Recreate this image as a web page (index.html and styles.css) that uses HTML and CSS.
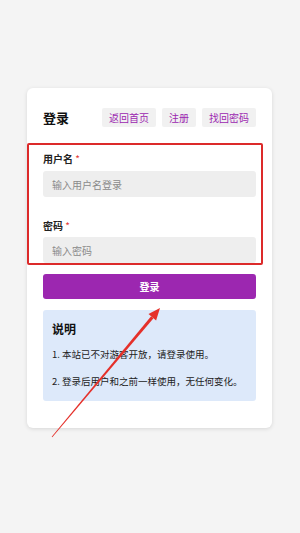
FILE: index.html
```html
<!DOCTYPE html>
<html lang="zh-CN">
<head>
<meta charset="utf-8">
<title>登录</title>
<link rel="stylesheet" href="styles.css">
</head>
<body>
<div class="page">
  <div class="card">
    <div class="head">
      <h1 class="title">登录</h1>
      <div class="links">
        <a class="link">返回首页</a>
        <a class="link">注册</a>
        <a class="link">找回密码</a>
      </div>
    </div>
    <form class="form">
      <label class="label">用户名 <span class="req">*</span></label>
      <input class="input" type="text" placeholder="输入用户名登录">
      <label class="label label-2">密码 <span class="req">*</span></label>
      <input class="input" type="password" placeholder="输入密码">
      <button class="submit" type="button">登录</button>
    </form>
    <div class="info">
      <h2 class="info-title">说明</h2>
      <p class="info-line">1. 本站已不对游客开放，请登录使用。</p>
      <p class="info-line">2. 登录后用户和之前一样使用，无任何变化。</p>
    </div>
    <div class="highlight"></div>
  </div>
</div>
<svg class="arrow" width="300" height="533" viewBox="0 0 300 533">
  <polygon fill="#e5302a" points="52.3,437.3 51.7,436.7 151.1,316.2 153.5,318.2"/>
  <polygon fill="#e5302a" points="160,308 156.1,320.4 148.5,314.0"/>
</svg>
</body>
</html>
```
FILE: styles.css
```css
* { box-sizing: border-box; }
html, body {
  margin: 0;
  padding: 0;
  height: 533px;
  overflow: hidden;
  background: #f4f4f4;
  font-family: "Noto Sans CJK SC", "Noto Sans", sans-serif;
  color: #222;
}
.page {
  padding: 88px 28px 0 27px;
}
.card {
  position: relative;
  background: #fff;
  border-radius: 6px;
  box-shadow: 0 1px 4px rgba(0,0,0,0.12);
  padding: 20px 16px 27px 16px;
}
.head {
  display: flex;
  align-items: center;
  justify-content: space-between;
  height: 19px;
}
.title {
  margin: 0;
  font-size: 13px;
  font-weight: 700;
  line-height: 19px;
  color: #111;
}
.links {
  display: flex;
  gap: 6px;
}
.link {
  display: block;
  height: 19px;
  line-height: 19px;
  padding: 0 7px;
  background: #f1f1f1;
  border-radius: 2px;
  font-size: 10px;
  color: #9c27b0;
  white-space: nowrap;
}
.form {
  display: flex;
  flex-direction: column;
  margin: 25px 0 0 0;
}
.label {
  font-size: 10px;
  font-weight: 700;
  line-height: 14px;
  color: #222;
  margin-bottom: 5px;
}
.label-2 { margin-top: 22px; margin-bottom: 4px; }
.req { color: #e53935; font-weight: 400; }
.input {
  height: 26px;
  border: none;
  border-radius: 3px;
  background: #eeeeee;
  padding: 0 9px;
  font-family: inherit;
  font-size: 10px;
  color: #333;
  outline: none;
}
.input::placeholder { color: #8a8a8a; }
.submit {
  margin-top: 11px;
  height: 25px;
  border: none;
  border-radius: 3px;
  background: #9c27b0;
  color: #fff;
  font-family: inherit;
  font-size: 10px;
  font-weight: 700;
}
.info {
  margin-top: 11px;
  background: #dde9fa;
  border-radius: 3px;
  padding: 10px 9px 13px 9px;
}
.info-title {
  margin: 0 0 9px 0;
  font-size: 12px;
  font-weight: 700;
  line-height: 18px;
  color: #111;
}
.info-line {
  margin: 0;
  font-size: 9.5px;
  line-height: 14px;
  color: #222;
}
.info-line + .info-line { margin-top: 13px; }
.highlight {
  position: absolute;
  left: 0;
  top: 55px;
  width: 236px;
  height: 122px;
  border: 2px solid #dc2a2a;
  border-radius: 2px;
  pointer-events: none;
}
.arrow {
  position: absolute;
  left: 0;
  top: 0;
  pointer-events: none;
}
```
